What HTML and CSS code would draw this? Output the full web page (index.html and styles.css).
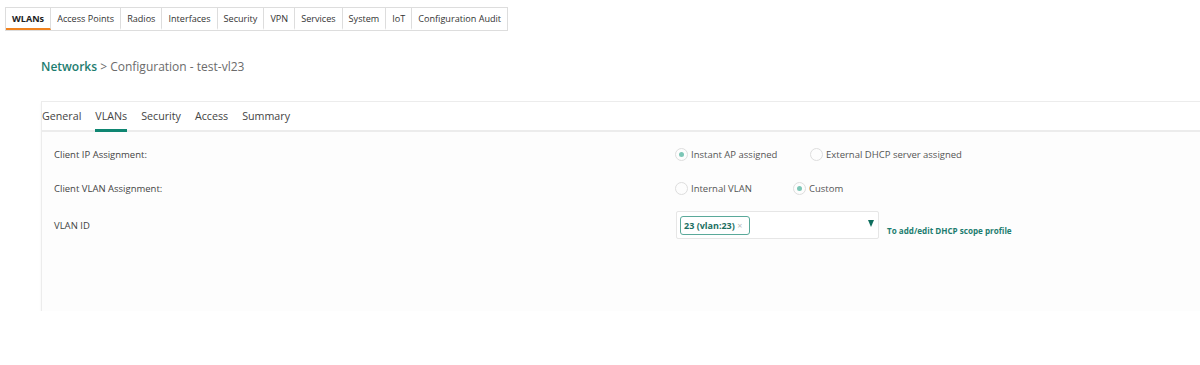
FILE: index.html
```html
<!DOCTYPE html>
<html lang="en">
<head>
  <meta charset="UTF-8" />
  <title>Networks - Configuration</title>
  <link rel="stylesheet" href="styles.css">
</head>
<body>
  <ul class="top-tabs">
    <li class="active">WLANs</li>
    <li>Access Points</li>
    <li>Radios</li>
    <li>Interfaces</li>
    <li>Security</li>
    <li>VPN</li>
    <li>Services</li>
    <li>System</li>
    <li>IoT</li>
    <li>Configuration Audit</li>
  </ul>

  <div class="breadcrumb">
    <a href="#">Networks</a> &gt; Configuration - test-vl23
  </div>

  <div class="panel">
    <ul class="wizard-tabs">
      <li>General</li>
      <li class="active">VLANs</li>
      <li>Security</li>
      <li>Access</li>
      <li>Summary</li>
    </ul>

    <div class="panel-body">
      <div class="row">
        <div class="row-label">Client IP Assignment:</div>
        <div class="row-field">
          <label class="radio checked first-ip"><span class="dot"></span>Instant AP assigned</label>
          <label class="radio"><span class="dot"></span>External DHCP server assigned</label>
        </div>
      </div>

      <div class="row">
        <div class="row-label">Client VLAN Assignment:</div>
        <div class="row-field">
          <label class="radio first-vlan"><span class="dot"></span>Internal VLAN</label>
          <label class="radio checked"><span class="dot"></span>Custom</label>
        </div>
      </div>

      <div class="row row-vlan">
        <div class="row-label">VLAN ID</div>
        <div class="row-field">
          <div class="select">
            <span class="tag">23 (vlan:23) <span class="tag-x">&times;</span></span>
            <span class="caret"></span>
          </div>
          <a class="scope-link" href="#">To add/edit DHCP scope profile</a>
        </div>
      </div>
    </div>
  </div>
</body>
</html>
```

FILE: styles.css
```css
/* global */
* {
  margin: 0;
  padding: 0;
  box-sizing: border-box;
}
body {
  background: #fff;
  font-family: "Open Sans", "Noto Sans", Arial, sans-serif;
  color: #444;
  padding: 5px 0 0 5px;
}
ul {
  list-style: none;
}
a {
  text-decoration: none;
}

/* top tab bar */
.top-tabs {
  display: inline-flex;
  border: 1px solid #ddd;
  height: 24px;
}
.top-tabs li {
  font-size: 9.1px;
  color: #333;
  padding: 0 6px;
  line-height: 21px;
  border-right: 1px solid #ddd;
  border-bottom: 2px solid transparent;
}
.top-tabs li:last-child {
  border-right: none;
}
.top-tabs li.active {
  font-weight: 700;
  color: #222;
  border-bottom-color: #f0821e;
}

/* breadcrumb */
.breadcrumb {
  margin: 27px 0 0 36px;
  font-size: 12px;
  color: #6b6b6b;
}
.breadcrumb a {
  color: #1d7d70;
  font-weight: 600;
}

/* panel */
.panel {
  margin: 26px 0 0 36px;
  border-top: 1px solid #ececec;
  border-left: 1px solid #ececec;
  box-shadow: 0 2px 2px rgba(0,0,0,0.06);
  height: 210px;
  background: #fdfdfd;
}
.wizard-tabs {
  display: flex;
  gap: 14px;
  background: #fff;
  border-bottom: 2px solid #ececec;
  height: 30px;
  align-items: flex-end;
}
.wizard-tabs li {
  font-size: 10.7px;
  color: #444;
  padding-bottom: 5px;
  margin-bottom: -2px;
  border-bottom: 3px solid transparent;
  line-height: 16px;
}
.wizard-tabs li.active {
  border-bottom-color: #0f8672;
}

.panel-body {
  padding: 5px 0 0 12px;
}
.row {
  display: flex;
  align-items: center;
  height: 34px;
}
.row-vlan {
  height: 40px;
}
.row-label {
  width: 621px;
  font-size: 9.5px;
  color: #444;
}
.row-field {
  display: flex;
  align-items: center;
}

/* radios */
.radio {
  display: flex;
  align-items: center;
  font-size: 9.5px;
  color: #555;
}
.radio.first-ip {
  width: 135px;
}
.radio.first-vlan {
  width: 118px;
}
.dot {
  width: 13px;
  height: 13px;
  border: 1px solid #ddd;
  border-radius: 50%;
  margin-right: 3px;
  display: flex;
  align-items: center;
  justify-content: center;
}
.radio.checked .dot::after {
  content: '';
  width: 5px;
  height: 5px;
  border-radius: 50%;
  background: #7cc6b6;
}

/* select */
.select {
  width: 203px;
  height: 28px;
  margin-left: 1px;
  border: 1px solid #e6e6e6;
  border-radius: 2px;
  background: #fff;
  display: flex;
  align-items: center;
  justify-content: space-between;
  padding: 0 4px 0 3px;
}
.tag {
  border: 1px solid #5aa99a;
  border-radius: 3px;
  font-size: 9px;
  font-weight: 700;
  color: #1d6f62;
  padding: 2px 3px;
  line-height: 13px;
  width: 70px;
}
.tag-x {
  color: #bbb;
  font-weight: 400;
}
.caret {
  width: 0;
  height: 0;
  border-left: 3.5px solid transparent;
  border-right: 3.5px solid transparent;
  border-top: 7px solid #0f6e5e;
  margin-top: -3px;
}
.scope-link {
  margin: 10px 0 0 8px;
  font-size: 8.1px;
  font-weight: 700;
  color: #1d7d70;
}
```
